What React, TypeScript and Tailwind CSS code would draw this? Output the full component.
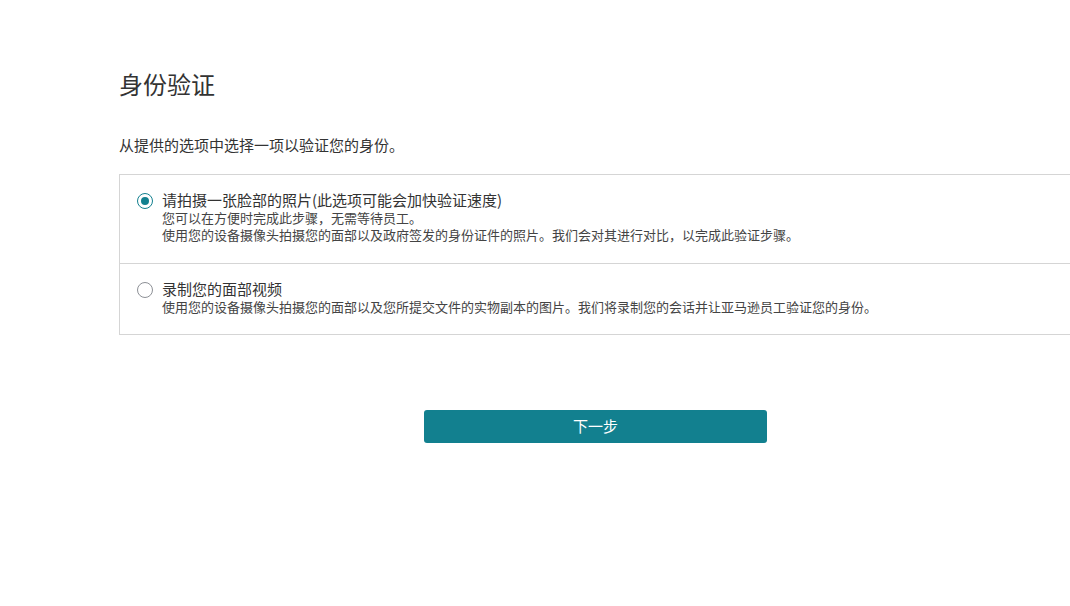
import React from "react";

const font = { fontFamily: '"Noto Sans CJK SC", "Noto Sans", sans-serif' };

function Radio({ checked }: { checked: boolean }) {
  return (
    <span
      className={
        "mt-[1px] flex h-4 w-4 shrink-0 items-center justify-center rounded-full border bg-white " +
        (checked ? "border-[#12808f] border-[1.5px]" : "border-[#8d9096]")
      }
    >
      {checked && <span className="h-[8px] w-[8px] rounded-full bg-[#12808f]" />}
    </span>
  );
}

export default function App() {
  return (
    <div className="min-h-[606px] w-[1070px] overflow-hidden bg-white text-[#333]" style={font}>
      <div className="ml-[119px] w-[953px] pt-[68px]">
        <h1 className="text-[24px] leading-[32px] font-normal text-[#333]">身份验证</h1>
        <p className="mt-[35px] text-[15px] leading-[20px] text-[#333]">从提供的选项中选择一项以验证您的身份。</p>
        <div className="mt-[19px] border border-[#d5d5d5]">
          <label className="flex items-start gap-[9px] pl-[17px] pt-4 pb-5">
            <span className="flex h-[18px] items-center">
              <Radio checked />
            </span>
            <span className="flex flex-col">
              <span className="text-[15px] leading-[18px] text-[#333]">请拍摄一张脸部的照片(此选项可能会加快验证速度)</span>
              <span className="text-[13px] leading-[17px] text-[#444]">您可以在方便时完成此步骤，无需等待员工。</span>
              <span className="text-[13px] leading-[17px] text-[#444]">使用您的设备摄像头拍摄您的面部以及政府签发的身份证件的照片。我们会对其进行对比，以完成此验证步骤。</span>
            </span>
          </label>
          <div className="h-px bg-[#d5d5d5]" />
          <label className="flex items-start gap-[9px] pl-[17px] pt-4 pb-[19px]">
            <span className="flex h-[18px] items-center">
              <Radio checked={false} />
            </span>
            <span className="flex flex-col">
              <span className="text-[15px] leading-[18px] text-[#333]">录制您的面部视频</span>
              <span className="text-[13px] leading-[17px] text-[#444]">使用您的设备摄像头拍摄您的面部以及您所提交文件的实物副本的图片。我们将录制您的会话并让亚马逊员工验证您的身份。</span>
            </span>
          </label>
        </div>
        <div className="mt-[75px] flex justify-center">
          <button className="h-[33px] w-[343px] rounded-[3px] bg-[#12808f] text-[15px] text-white">下一步</button>
        </div>
      </div>
    </div>
  );
}
